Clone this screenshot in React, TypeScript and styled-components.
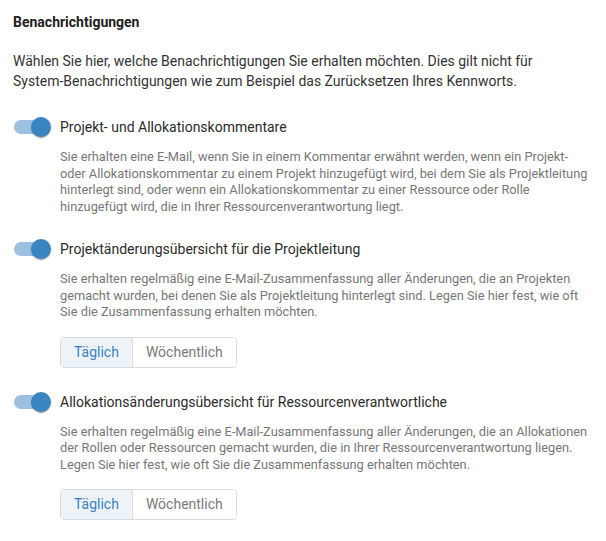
import React, { useState } from "react";
import styled, { createGlobalStyle } from "styled-components";

const GlobalStyle = createGlobalStyle`
  html, body {
    margin: 0;
    padding: 0;
    background: #ffffff;
  }
  body {
    font-family: Roboto, "Liberation Sans", Arial, sans-serif;
    -webkit-font-smoothing: antialiased;
  }
`;

type Frequency = "daily" | "weekly";

interface Setting {
  id: string;
  label: string;
  description: string;
  frequency?: Frequency;
}

const SETTINGS: Setting[] = [
  {
    id: "comments",
    label: "Projekt- und Allokationskommentare",
    description:
      "Sie erhalten eine E-Mail, wenn Sie in einem Kommentar erwähnt werden, wenn ein Projekt- oder Allokationskommentar zu einem Projekt hinzugefügt wird, bei dem Sie als Projektleitung hinterlegt sind, oder wenn ein Allokationskommentar zu einer Ressource oder Rolle hinzugefügt wird, die in Ihrer Ressourcenverantwortung liegt.",
  },
  {
    id: "project-digest",
    label: "Projektänderungsübersicht für die Projektleitung",
    description:
      "Sie erhalten regelmäßig eine E-Mail-Zusammenfassung aller Änderungen, die an Projekten gemacht wurden, bei denen Sie als Projektleitung hinterlegt sind. Legen Sie hier fest, wie oft Sie die Zusammenfassung erhalten möchten.",
    frequency: "daily",
  },
  {
    id: "allocation-digest",
    label: "Allokationsänderungsübersicht für Ressourcenverantwortliche",
    description:
      "Sie erhalten regelmäßig eine E-Mail-Zusammenfassung aller Änderungen, die an Allokationen der Rollen oder Ressourcen gemacht wurden, die in Ihrer Ressourcenverantwortung liegen. Legen Sie hier fest, wie oft Sie die Zusammenfassung erhalten möchten.",
    frequency: "daily",
  },
];

const Toggle: React.FC<{ checked: boolean; onChange: () => void }> = ({
  checked,
  onChange,
}) => (
  <SwitchRoot role="switch" aria-checked={checked} onClick={onChange}>
    <SwitchTrack $checked={checked} />
    <SwitchThumb $checked={checked} />
  </SwitchRoot>
);

const SettingBlock: React.FC<{ setting: Setting }> = ({ setting }) => {
  const [enabled, setEnabled] = useState(true);
  const [frequency, setFrequency] = useState<Frequency | undefined>(
    setting.frequency
  );

  return (
    <Section>
      <SettingRow>
        <Toggle checked={enabled} onChange={() => setEnabled(!enabled)} />
        <SettingLabel>{setting.label}</SettingLabel>
      </SettingRow>
      <SettingBody>
        <Description>{setting.description}</Description>
        {frequency ? (
          <ButtonGroup>
            <GroupButton
              $active={frequency === "daily"}
              onClick={() => setFrequency("daily")}
            >
              Täglich
            </GroupButton>
            <GroupButton
              $active={frequency === "weekly"}
              onClick={() => setFrequency("weekly")}
            >
              Wöchentlich
            </GroupButton>
          </ButtonGroup>
        ) : null}
      </SettingBody>
    </Section>
  );
};

export default function App() {
  return (
    <>
      <GlobalStyle />
      <Page>
        <Title>Benachrichtigungen</Title>
        <Intro>
          Wählen Sie hier, welche Benachrichtigungen Sie erhalten möchten. Dies
          gilt nicht für System-Benachrichtigungen wie zum Beispiel das
          Zurücksetzen Ihres Kennworts.
        </Intro>
        <SettingsList>
          {SETTINGS.map((s) => (
            <SettingBlock key={s.id} setting={s} />
          ))}
        </SettingsList>
      </Page>
    </>
  );
}

const Page = styled.div`
  width: 606px;
  box-sizing: border-box;
  padding: 12px 12px 20px 13px;
`;

const Title = styled.h2`
  margin: 0;
  font-size: 14px;
  line-height: 20px;
  font-weight: 700;
  color: #212121;
`;

const Intro = styled.p`
  margin: 19px 0 0;
  max-width: 545px;
  font-size: 14px;
  line-height: 20px;
  color: #333333;
`;

const SettingsList = styled.div`
  display: flex;
  flex-direction: column;
  gap: 22px;
  margin-top: 24px;
`;

const Section = styled.div`
  display: flex;
  flex-direction: column;
`;

const SettingRow = styled.div`
  display: flex;
  align-items: center;
  margin-left: -11px;
  height: 24px;
`;

const SwitchRoot = styled.span`
  position: relative;
  display: inline-block;
  width: 58px;
  height: 38px;
  padding: 12px;
  box-sizing: border-box;
  cursor: pointer;
  flex-shrink: 0;
`;

const SwitchTrack = styled.span<{ $checked: boolean }>`
  display: block;
  width: 100%;
  height: 100%;
  border-radius: 7px;
  background: ${({ $checked }) => ($checked ? "#3a84c1" : "#000000")};
  opacity: ${({ $checked }) => ($checked ? 0.5 : 0.38)};
`;

const SwitchThumb = styled.span<{ $checked: boolean }>`
  position: absolute;
  top: 9px;
  left: 9px;
  width: 20px;
  height: 20px;
  border-radius: 50%;
  background: ${({ $checked }) => ($checked ? "#3a84c1" : "#fafafa")};
  box-shadow: 0 2px 1px -1px rgba(0, 0, 0, 0.2),
    0 1px 1px 0 rgba(0, 0, 0, 0.14), 0 1px 3px 0 rgba(0, 0, 0, 0.12);
  transform: translateX(${({ $checked }) => ($checked ? "20px" : "0")});
`;

const SettingLabel = styled.span`
  font-size: 14px;
  line-height: 24px;
  color: #2b2b2b;
`;

const SettingBody = styled.div`
  display: flex;
  flex-direction: column;
  align-items: flex-start;
  padding-left: 47px;
`;

const Description = styled.p`
  margin: 10px 0 0;
  font-size: 12.8px;
  line-height: 16.5px;
  color: #777777;
`;

const ButtonGroup = styled.div`
  display: inline-flex;
  margin-top: 16px;
  border: 1px solid #dcdcdc;
  border-radius: 4px;
  overflow: hidden;
`;

const GroupButton = styled.button<{ $active: boolean }>`
  font-family: inherit;
  font-size: 14px;
  line-height: 29px;
  padding: 0 13px;
  border: none;
  background: ${({ $active }) => ($active ? "#edf4f9" : "#ffffff")};
  color: ${({ $active }) => ($active ? "#3a7fbd" : "#7a7a7a")};
  cursor: pointer;

  & + & {
    border-left: 1px solid #dcdcdc;
  }
`;
